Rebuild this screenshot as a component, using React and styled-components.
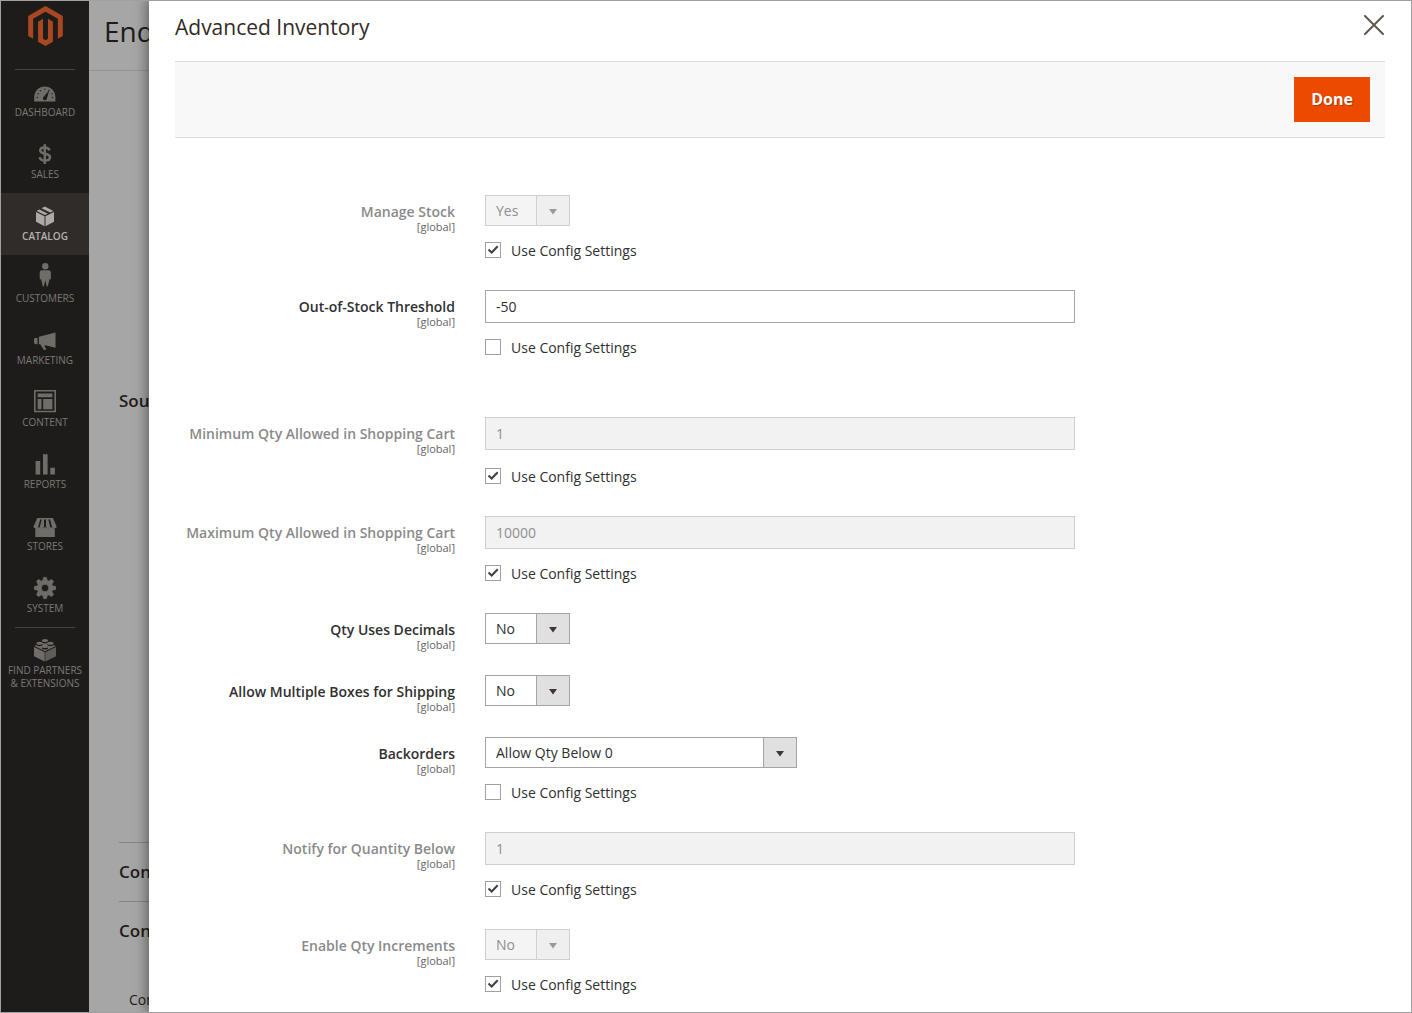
import React, { useId, useState } from "react";
import styled, { createGlobalStyle } from "styled-components";

const GlobalStyle = createGlobalStyle`
  *, *::before, *::after { box-sizing: border-box; }
  body {
    margin: 0;
    background: #fff;
    color: #303030;
    font-family: "Open Sans", "Noto Sans", sans-serif;
    font-size: 14px;
  }
  h1, h2, p { margin: 0; }
  button, input, select { font-family: inherit; }
`;

const Frame = styled.div`
  position: relative;
  display: flex;
  height: 100vh;
  overflow: hidden;
  border: 1px solid #a0a0a0;
  background: #a6a6a6;
`;

/* ---------- Sidebar ---------- */

const Sidebar = styled.nav`
  flex: none;
  display: flex;
  flex-direction: column;
  width: 88px;
  background: #1e1c1a;
`;

const LogoLink = styled.a`
  display: flex;
  justify-content: center;
  height: 68px;
  padding-top: 5px;
  color: #a94722;
`;

const Divider = styled.hr`
  width: 60px;
  height: 1px;
  margin: 0 auto -1px;
  border: 0;
  background: #48413d;
`;

const MenuLink = styled.a`
  display: flex;
  flex-direction: column;
  align-items: center;
  min-height: 62px;
  padding-top: 13px;
  background: ${(p) => (p.$active ? "#302c29" : "transparent")};
  color: ${(p) => (p.$active ? "#b5b2ae" : "#7d7873")};
  font-size: 10px;
  font-weight: ${(p) => (p.$active ? 600 : 400)};
  line-height: 13px;
  text-align: center;
  text-decoration: none;
  text-transform: uppercase;
  white-space: pre-line;
`;

const MenuIcon = styled.svg`
  flex: none;
  width: 24px;
  height: 24px;
  overflow: visible;
  fill: ${(p) => (p.$active ? "#aeaaa6" : "#706d69")};
`;

const CUT = "#1e1c1a";

const icons = {
  dashboard: (
    <>
      <path d="M1.2 19.5V15a10.6 10.6 0 0 1 21.2 0v4.5Z" />
      <path
        d="M4.2 15.500h.1M5 11.600l.1.1M7.300 8.600l.1.1M11.800 7.100v.1M16 8.300l.1-.1M19 11.900l.1-.1M19.500 15.500h.1"
        fill="none" stroke={CUT} strokeWidth="1.300" strokeLinecap="round"
      />
      <path d="M16.300 8.300 13.900 16.400a2 2 0 1 1-3-1.800Z" fill={CUT} />
    </>
  ),
  sales: (
    <path
      d="M16.600 6.300c-.9-2-2.600-2.800-4.900-2.800-2.700 0-4.500 1.100-4.500 3.100 0 4.300 9.800 2 9.800 6.600 0 2.100-2 3.400-5 3.400-2.800 0-4.700-1.100-5.400-3.500M11.800.2v19.800"
      fill="none" stroke="#706d69" strokeWidth="2.500"
    />
  ),
  catalog: (
    <>
      <path d="M3 6.100 11.500 10.300V20.200L3 15.800Z" />
      <path d="M21 6.100 12.500 10.300V20.200L21 15.800Z" />
      <path d="M3.600 4.900 6.400 3.400 14.800 7.700 12 9.100Z" />
      <path d="M8.600 2.300 11.800.4 20.400 4.900 17.200 6.600Z" />
    </>
  ),
  customers: (
    <>
      <circle cx="12.300" cy="-1.700" r="3.200" />
      <path d="M8.900 2.300h6.800c1.500.2 2.200 1.200 2.200 2.700v5.600c0 1.200-1.600 1.200-1.600 0v1.600l-1.600 6.300h-1l-1.400-6.200-1.500 6.200h-1l-1.500-6.300v-1.600c0 1.200-1.600 1.200-1.600 0V5c0-1.500.7-2.500 2.200-2.700Z" />
    </>
  ),
  marketing: (
    <path d="M1.600 8h2.900v6.200H3.200C1.300 14.200 1 12.700 1 10.900 1 9.300 1.200 8.500 1.600 8Zm4.300-1.300L22.500 2.500v15.200l-10.300-2.500-.8.700 2 3.600-2.600.5-3.300-5.600-1.600-.3Z" />
  ),
  content: (
    <>
      <path d="M1-2h22v22.300H1Zm1.600 1.600v19.100h18.800V-.4Z" fillRule="evenodd" />
      <path d="M4.600 1.600h14.800v3.700H4.600ZM4.600 7h3.900v10.300H4.600Zm5.600 0h9.200v10.300h-9.200Z" />
    </>
  ),
  reports: <path d="M2.600 7h4.600v13.500H2.600ZM10 .2h4.600v20.300H10Zm7.300 13.600h4.600v6.700h-4.600Z" />,
  stores: (
    <>
      <path d="M4.200 2h3.400L5.100 11.300c-1 1.800-4 1.400-4.800-.2Zm4.800 0h2v9c-.8 1.800-3.300 1.800-4.200.2Zm4 0h2l2.200 9.200c-.9 1.600-3.400 1.600-4.200-.2Zm3.800 0h3.100l3.900 9.100c-.8 1.600-3.700 2-4.700.2Z" />
      <path d="M4.200 2h15.700v1.600H4.200ZM2.300 12.300c1.600.2 2.600-.3 3.400-1.200 1.800 1.500 4.500 1.500 6.300-.1 1.800 1.600 4.500 1.600 6.200.1.9.9 2 1.400 3.600 1.200V21H2.300Z" />
    </>
  ),
  system: (
    <path
      fillRule="evenodd"
      stroke="#706d69" strokeWidth=".8" strokeLinejoin="round"
      d="m10.600-.6h2.800l.7 3.100 1.700.7L18.500 1.500l2 2-1.700 2.700.7 1.700 3.100.7v2.800l-3.100.7-.7 1.700 1.700 2.700-2 2-2.700-1.700-1.700.7-.7 3.100h-2.800l-.7-3.100-1.700-.7-2.700 1.700-2-2 1.700-2.700-.7-1.700-3.100-.7V8.600l3.100-.7.7-1.700-1.700-2.700 2-2 2.700 1.700 1.700-.7ZM12 6.200a3.800 3.800 0 1 0 0 7.600 3.800 3.800 0 0 0 0-7.600Z"
    />
  ),
  partners: (
    <>
      <path d="M1 7 11.700 12.300V21.600L1 16.300Z" />
      <path d="M23 7 12.300 12.300V21.600L23 16.300Z" opacity=".8" />
      <path d="M1.300 6 12 .8 22.700 6 12 11.300Z" />
      <g fill={CUT}>
        <ellipse cx="12" cy="1.700" rx="3.200" ry="1.700" />
        <ellipse cx="6.500" cy="4.600" rx="3.200" ry="1.700" />
        <ellipse cx="17.500" cy="4.600" rx="3.200" ry="1.700" />
        <ellipse cx="12" cy="7.900" rx="3.200" ry="1.700" />
      </g>
      <g>
        <ellipse cx="12" cy=".4" rx="3" ry="1.500" />
        <ellipse cx="6.500" cy="3.300" rx="3" ry="1.500" />
        <ellipse cx="17.500" cy="3.300" rx="3" ry="1.500" />
        <ellipse cx="12" cy="6.600" rx="3" ry="1.500" />
      </g>
    </>
  ),
};

const menu = [
  ["dashboard", "Dashboard"],
  ["sales", "Sales"],
  ["catalog", "Catalog"],
  ["customers", "Customers"],
  ["marketing", "Marketing"],
  ["content", "Content"],
  ["reports", "Reports"],
  ["stores", "Stores"],
  ["system", "System"],
];

function MenuItem({ icon, active, children }) {
  return (
    <MenuLink href="#" $active={active} aria-current={active ? "page" : undefined}>
      <MenuIcon viewBox="0 0 24 24" $active={active} aria-hidden="true">
        {icons[icon]}
      </MenuIcon>
      {children}
    </MenuLink>
  );
}

/* ---------- Page behind the panel ---------- */

const Page = styled.main`
  flex: 1;
  min-width: 0;
  display: flex;
  flex-direction: column;
  color: #1f1b19;
`;

const PageHeader = styled.header`
  flex: none;
  display: flex;
  align-items: center;
  height: 70px;
  padding: 0 15px 10px;
  border-bottom: 1px solid #949494;
`;

const PageTitle = styled.h1`
  font-size: 28px;
  font-weight: 400;
  line-height: 38px;
`;

const Section = styled.section`
  flex: none;
  height: ${(p) => p.$height}px;
  margin-left: 30px;
  padding-top: 17px;
  border-top: ${(p) => (p.$ruled ? "1px solid #858585" : "0")};
`;

const SectionTitle = styled.h2`
  font-size: 17px;
  font-weight: 600;
  line-height: 24px;
`;

const SectionNote = styled.p`
  padding: 47px 0 0 10px;
  line-height: 20px;
`;

const Blank = styled.div`
  flex: none;
  height: 301px;
`;

/* ---------- Slide-out panel ---------- */

const Panel = styled.aside`
  position: absolute;
  inset: 0 0 0 148px;
  padding: 0 26px;
  background: #fff;
  box-shadow: 0 0 12px 2px rgba(0, 0, 0, 0.45);
  overflow: hidden;
`;

const PanelHeader = styled.header`
  display: flex;
  align-items: flex-start;
  justify-content: space-between;
  height: 60px;
  padding-top: 11px;
`;

const PanelTitle = styled.h1`
  color: #332b27;
  font-size: 21px;
  font-weight: 400;
  line-height: 31px;
`;

const CloseButton = styled.button`
  display: flex;
  padding: 3px 1px;
  border: 0;
  background: none;
  cursor: pointer;
`;

const ActionBar = styled.div`
  display: flex;
  justify-content: flex-end;
  padding: 15px;
  border: 1px solid #dcdcdc;
  border-width: 1px 0;
  background: #f8f8f8;
`;

const DoneButton = styled.button`
  height: 45px;
  min-width: 76px;
  padding: 0 15px 2px;
  border: 1px solid #eb4a00;
  background: #eb4a00;
  color: #fff;
  font-size: 16px;
  font-weight: 700;
  line-height: 22px;
  text-shadow: 1px 1px 0 rgba(0, 0, 0, 0.25);
  cursor: pointer;
`;

const Form = styled.form`
  display: flex;
  flex-direction: column;
  gap: 61px;
  padding-top: 57px;
`;

const FieldGroup = styled.div`
  display: flex;
  flex-direction: column;
  gap: 31px;
`;

const FieldRow = styled.div`
  display: grid;
  grid-template-columns: 280px minmax(0, 590px);
  gap: 30px;
  align-items: start;
`;

const FieldLabel = styled.label`
  height: 31px;
  padding-top: 7px;
  color: ${(p) => (p.$muted ? "#8a8a8a" : "#303030")};
  font-weight: 600;
  line-height: 19px;
  text-align: right;
`;

const Scope = styled.span`
  display: block;
  color: #666;
  font-size: 11px;
  font-weight: 400;
  line-height: 12px;
`;

const Controls = styled.div`
  display: flex;
  flex-direction: column;
  align-items: flex-start;
  gap: ${(p) => (p.$loose ? "18px" : "16px")};
`;

const TextInput = styled.input`
  width: 100%;
  height: 33px;
  padding: 0 10px;
  border: 1px solid #a5a5a5;
  border-radius: 0;
  background: #fff;
  color: #303030;
  font-size: 14px;

  &:disabled {
    border-color: #cfcfcf;
    background: #f2f2f2;
    color: #8f8f8f;
  }
`;

const SelectBox = styled.span`
  display: grid;
  grid-template-columns: minmax(0, 1fr) 34px;
  align-items: center;
  width: ${(p) => (p.$wide ? "312px" : "85px")};
  max-width: 100%;
`;

const Select = styled.select`
  grid-area: 1 / 1 / 2 / 3;
  width: 100%;
  height: 31px;
  padding: 0 34px 1px 10px;
  appearance: none;
  border: 1px solid #a5a5a5;
  border-radius: 0;
  background: linear-gradient(to right, #a5a5a5 1px, #e0e0e0 1px) right / 33px 100% no-repeat #fff;
  color: #303030;
  font-size: 14px;

  &:disabled {
    border-color: #cfcfcf;
    background: linear-gradient(to right, #cfcfcf 1px, #efefef 1px) right / 33px 100% no-repeat #f4f4f4;
    color: #8f8f8f;
    opacity: 1;
  }
`;

const Caret = styled.svg`
  grid-area: 1 / 2;
  justify-self: center;
  z-index: 1;
  width: 8px;
  height: 6px;
  margin-top: 3px;
  fill: ${(p) => (p.$muted ? "#999" : "#41362f")};
  pointer-events: none;
`;

const CheckLabel = styled.label`
  display: flex;
  gap: 10px;
  height: 17px;
  line-height: 17px;
  cursor: pointer;
`;

const CheckBoxWrap = styled.span`
  display: grid;
  width: 16px;
  height: 16px;
`;

const CheckInput = styled.input`
  grid-area: 1 / 1;
  width: 16px;
  height: 16px;
  margin: 0;
  appearance: none;
  border: 1px solid #a0a0a0;
  background: #fff;

  & + svg { visibility: hidden; }
  &:checked + svg { visibility: visible; }
`;

const Tick = styled.svg`
  grid-area: 1 / 1;
  width: 16px;
  height: 16px;
  fill: none;
  stroke: #41403e;
  stroke-width: 2;
  pointer-events: none;
`;

const fieldGroups = [
  [
    { label: "Manage Stock", options: ["Yes", "No"], value: "Yes", config: true },
    { label: "Out-of-Stock Threshold", value: "-50", config: false },
  ],
  [
    { label: "Minimum Qty Allowed in Shopping Cart", value: "1", config: true, loose: true },
    { label: "Maximum Qty Allowed in Shopping Cart", value: "10000", config: true },
    { label: "Qty Uses Decimals", options: ["No", "Yes"], value: "No" },
    { label: "Allow Multiple Boxes for Shipping", options: ["No", "Yes"], value: "No" },
    { label: "Backorders", options: ["Allow Qty Below 0"], value: "Allow Qty Below 0", config: false, wide: true },
    { label: "Notify for Quantity Below", value: "1", config: true },
    { label: "Enable Qty Increments", options: ["No", "Yes"], value: "No", config: true },
  ],
];

function Field({ label, options, value, config, wide, loose }) {
  const id = useId();
  const [useConfig, setUseConfig] = useState(config);
  const muted = useConfig === true;
  return (
    <FieldRow>
      <FieldLabel htmlFor={id} $muted={muted}>
        {label}
        <Scope>[global]</Scope>
      </FieldLabel>
      <Controls $loose={loose}>
        {options ? (
          <SelectBox $wide={wide}>
            <Select id={id} defaultValue={value} disabled={muted}>
              {options.map((o) => (
                <option key={o}>{o}</option>
              ))}
            </Select>
            <Caret viewBox="0 0 8 6" $muted={muted} aria-hidden="true">
              <path d="M0 0h8L4 5.500Z" />
            </Caret>
          </SelectBox>
        ) : (
          <TextInput id={id} type="text" defaultValue={value} disabled={muted} />
        )}
        {config !== undefined && (
          <CheckLabel>
            <CheckBoxWrap>
              <CheckInput
                type="checkbox"
                checked={useConfig}
                onChange={(e) => setUseConfig(e.target.checked)}
              />
              <Tick viewBox="0 0 16 16" aria-hidden="true">
                <path d="M3.500 7.500 6.700 10.500 12.700 4.300" />
              </Tick>
            </CheckBoxWrap>
            Use Config Settings
          </CheckLabel>
        )}
      </Controls>
    </FieldRow>
  );
}

export default function App() {
  return (
    <>
      <GlobalStyle />
      <Frame>
        <Sidebar>
          <LogoLink href="#" aria-label="Magento">
            <svg width="35" height="40" viewBox="1.600 0 20.800 24" fill="currentColor" aria-hidden="true">
              <path d="M12 24l-4.455-2.572v-12l2.970-1.715v12.001l1.485.902 1.485-.902V7.713l2.971 1.715v12L12 24zM22.391 6.003v12l-2.969 1.714V7.713L12 3.430 4.574 7.713v12.004l-2.965-1.714v-12L12.001 0l10.390 6.003z" />
            </svg>
          </LogoLink>
          <Divider />
          {menu.map(([icon, label]) => (
            <MenuItem key={icon} icon={icon} active={icon === "catalog"}>
              {label}
            </MenuItem>
          ))}
          <Divider />
          <MenuItem icon="partners">{"Find Partners\n& Extensions"}</MenuItem>
        </Sidebar>

        <Page>
          <PageHeader>
            <PageTitle>End</PageTitle>
          </PageHeader>
          <Blank />
          <Section $height={470}>
            <SectionTitle>Sou</SectionTitle>
          </Section>
          <Section $height={59} $ruled>
            <SectionTitle>Con</SectionTitle>
          </Section>
          <Section $height={111} $ruled>
            <SectionTitle>Con</SectionTitle>
            <SectionNote>Con</SectionNote>
          </Section>
        </Page>

        <Panel role="dialog" aria-label="Advanced Inventory">
          <PanelHeader>
            <PanelTitle>Advanced Inventory</PanelTitle>
            <CloseButton type="button" aria-label="Close">
              <svg width="20" height="20" viewBox="0 0 20 20" fill="none" stroke="#5f5850" strokeWidth="2" strokeLinecap="round" aria-hidden="true">
                <path d="M1 1 19 19M19 1 1 19" />
              </svg>
            </CloseButton>
          </PanelHeader>
          <ActionBar>
            <DoneButton type="button">Done</DoneButton>
          </ActionBar>
          <Form>
            {fieldGroups.map((fields, i) => (
              <FieldGroup key={i}>
                {fields.map((f) => (
                  <Field key={f.label} {...f} />
                ))}
              </FieldGroup>
            ))}
          </Form>
        </Panel>
      </Frame>
    </>
  );
}
